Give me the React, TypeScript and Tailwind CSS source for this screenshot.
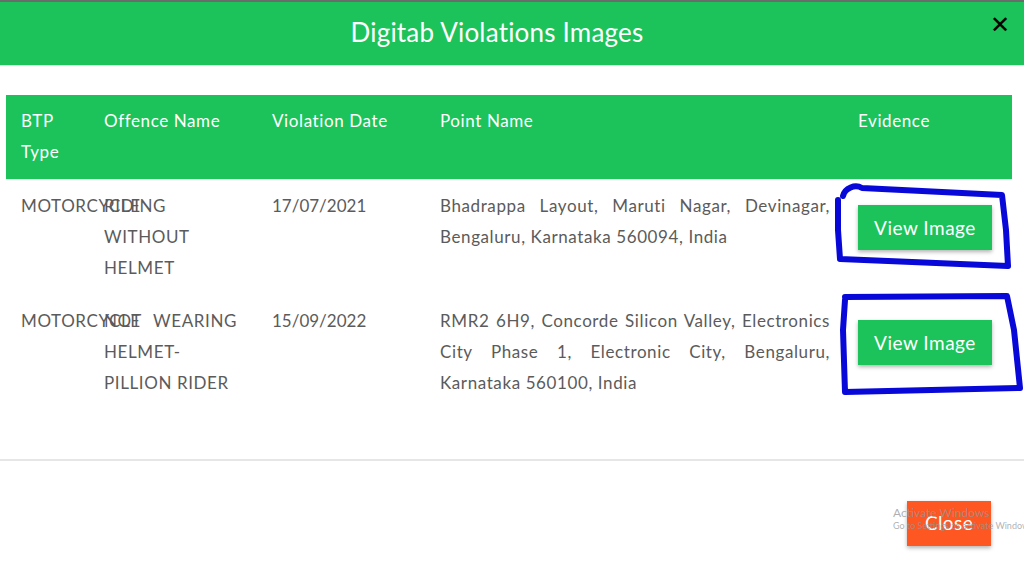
import React from "react";

const rows = [
  {
    type: "MOTORCYCLE",
    offence: "RIDING WITHOUT HELMET",
    date: "17/07/2021",
    point: "Bhadrappa Layout, Maruti Nagar, Devinagar, Bengaluru, Karnataka 560094, India",
  },
  {
    type: "MOTORCYCLE",
    offence: "NOT WEARING HELMET- PILLION RIDER",
    date: "15/09/2022",
    point: "RMR2 6H9, Concorde Silicon Valley, Electronics City Phase 1, Electronic City, Bengaluru, Karnataka 560100, India",
  },
];

export default function App() {
  return (
    <div
      className="relative w-[1024px] h-[564px] overflow-hidden bg-white text-[#5b5b5b]"
      style={{ fontFamily: "Lato, 'Open Sans', sans-serif" }}
    >
      <div className="h-[66px] border-t-2 border-[#6b6b6b] bg-[#1cc35a] border-b border-b-[#d8efe0] relative flex items-center justify-center pr-[30px]">
        <h1 className="text-white text-[26px] tracking-[0.2px] -mt-[2px]">Digitab Violations Images</h1>
        <span className="absolute right-[14px] top-[10px] text-black text-[24px] leading-none">✕</span>
      </div>

      <div className="px-[6px] pt-[29px]">
        <table className="table-fixed w-[1006px] border-collapse text-[17px] leading-[31px] tracking-[0.6px]">
          <colgroup>
            <col className="w-[83px]" />
            <col className="w-[168px]" />
            <col className="w-[168px]" />
            <col className="w-[418px]" />
            <col className="w-[169px]" />
          </colgroup>
          <thead>
            <tr className="bg-[#1cc35a] text-white text-left">
              <th className="font-normal align-top pl-[15px] pr-[15px] pt-[10px] pb-[12px]">BTP Type</th>
              <th className="font-normal align-top pl-[15px] pt-[10px] pb-[12px]">Offence Name</th>
              <th className="font-normal align-top pl-[15px] pt-[10px] pb-[12px]">Violation Date</th>
              <th className="font-normal align-top pl-[15px] pt-[10px] pb-[12px]">Point Name</th>
              <th className="font-normal align-top pl-[15px] pt-[10px] pb-[12px]">Evidence</th>
            </tr>
          </thead>
          <tbody>
            {rows.map((r, i) => (
              <tr key={i} className={i === 0 ? "border-t border-[#dff5e8]" : ""}>
                <td className="align-top pl-[15px] pt-[10px] pb-[12px] whitespace-nowrap overflow-visible">{r.type}</td>
                <td className="align-top pl-[15px] pr-[20px] pt-[10px] pb-[12px] text-justify">{r.offence}</td>
                <td className="align-top pl-[15px] pt-[10px] pb-[12px] tracking-[0px]">{r.date}</td>
                <td className="align-top pl-[15px] pr-[13px] pt-[10px] pb-[12px] text-justify">{r.point}</td>
                <td className="align-top pl-[15px] pt-[25px]">
                  <button className="w-[134px] h-[45px] bg-[#1cc35a] text-white text-[19px] tracking-[0.5px] shadow-[0_2px_4px_rgba(0,0,0,0.3)]">
                    View Image
                  </button>
                </td>
              </tr>
            ))}
          </tbody>
        </table>
      </div>

      <div className="absolute left-0 right-0 top-[459px] border-t-2 border-[#e6e6e6]" />

      <button className="absolute left-[907px] top-[501px] w-[84px] h-[45px] bg-[#ff5722] text-white text-[19px] tracking-[0.4px] shadow-[0_2px_4px_rgba(0,0,0,0.3)]">
        Close
      </button>

      <div className="absolute left-[893px] top-[505px] text-[rgba(150,150,150,0.75)] whitespace-nowrap pointer-events-none">
        <div className="text-[12px] leading-[15px]">Activate Windows</div>
        <div className="text-[9px] leading-[12px]">Go to Settings to activate Windows.</div>
      </div>

      <svg className="absolute inset-0 pointer-events-none" width="1024" height="564">
        <path
          d="M843 196 C 845 188, 855 184, 862 188 L 1002 195 L 1006 230 L 1008 266 L 840 259 L 838 230 L 838 200"
          fill="none"
          stroke="#0808d8"
          strokeWidth="6"
          strokeLinejoin="round"
          strokeLinecap="round"
        />
        <path
          d="M845 297 L 1007 296 L 1014 330 L 1020 388 L 845 392 L 843 330 L 845 300"
          fill="none"
          stroke="#0808d8"
          strokeWidth="6"
          strokeLinejoin="round"
          strokeLinecap="round"
        />
      </svg>
    </div>
  );
}
